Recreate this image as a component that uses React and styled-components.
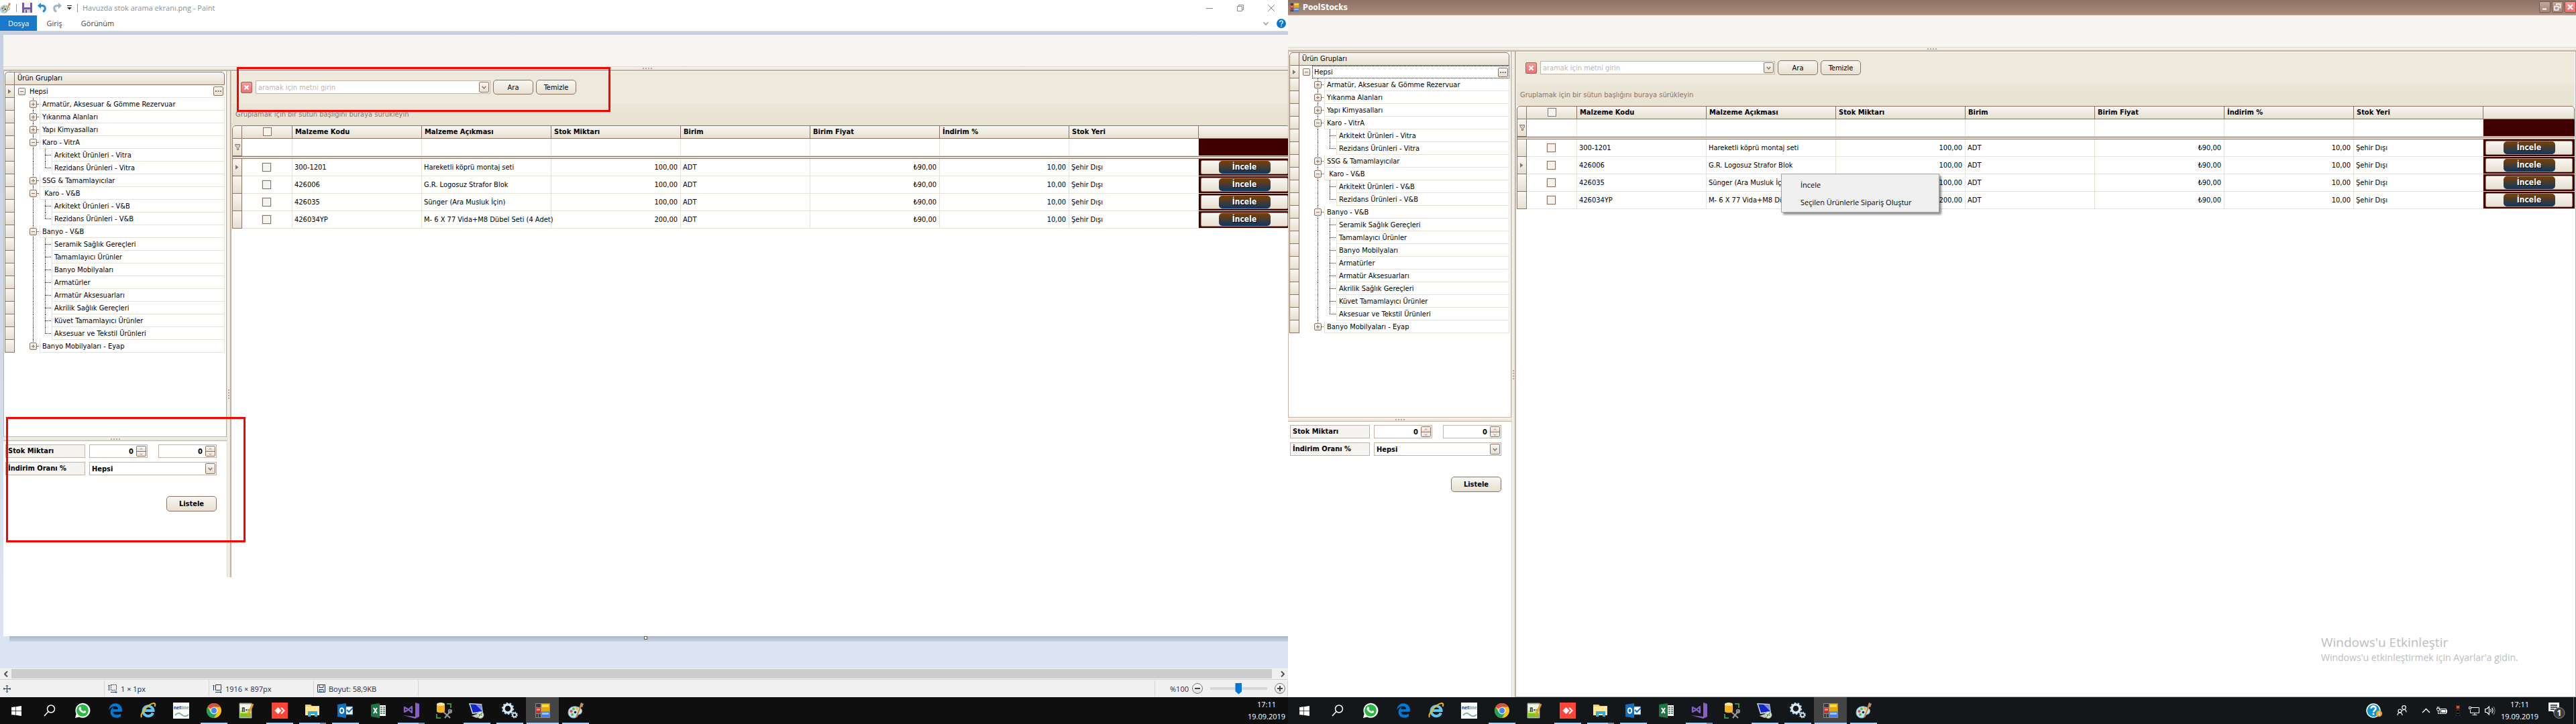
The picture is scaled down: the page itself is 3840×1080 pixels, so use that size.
import React, { useId } from "react";
import styled, { createGlobalStyle, css } from "styled-components";
import { FaWindows, FaEdgeLegacy, FaWhatsapp } from "react-icons/fa";

const TAHOMA = '"DejaVu Sans Condensed", "DejaVu Sans", sans-serif';
const SEGOE = '"Open Sans", "Noto Sans", sans-serif';

const brown = "#8c7264";
const taupe = "#c3b3a6";
const rule = "#e7e2d6";
const bevel = "linear-gradient(#f8f6f3, #e7e0d0)";

const GlobalStyle = createGlobalStyle`
  *, *::before, *::after { box-sizing: border-box; }
  html, body { margin: 0; }
  body { background: #fff; font-family: ${TAHOMA}; font-size: 11px; color: #000; overflow: hidden; }
  button, input, select { font: inherit; color: inherit; margin: 0; padding: 0; }
`;

/* ---------- desktop ---------- */

const Desktop = styled.div`
  display: grid;
  grid-template-columns: repeat(2, minmax(0, 1fr));
  height: 100vh;
`;

const Screen = styled.section`
  display: flex;
  flex-direction: column;
  min-width: 0;
  min-height: 0;
  height: 100%;
  position: relative;
  background: #fff;
`;

/* ---------- stock application ---------- */

const StockShell = styled.div`
  display: flex;
  flex-direction: column;
  flex: 1;
  min-height: 0;
`;

const Banner = styled.div`
  height: 47px;
  flex: none;
  background: #f6f5f1;
`;

const Grip = styled.span`
  display: block;
  width: ${(p) => (p.$vertical ? 2 : 14)}px;
  height: ${(p) => (p.$vertical ? 14 : 2)}px;
  background: repeating-linear-gradient(${(p) => (p.$vertical ? "180deg" : "90deg")}, #b9a797 0 2px, transparent 2px 4px);
`;

const HSplitter = styled.div`
  height: 7px;
  flex: none;
  display: flex;
  align-items: center;
  justify-content: center;
  background: linear-gradient(#f8f5ef, #e9e3d6);
  border-top: 1px solid ${(p) => (p.$strong ? taupe : "#ded8cb")};
  border-bottom: ${(p) => (p.$strong ? 1 : 2)}px solid ${taupe};
`;

const VSplitter = styled.div`
  width: 7px;
  flex: none;
  display: flex;
  align-items: center;
  justify-content: center;
  background: linear-gradient(90deg, #f8f5ef, #ece6da);
  border-left: 1px solid #ded8cb;
  border-right: 2px solid ${taupe};
`;

const Columns = styled.div`
  display: flex;
  flex: 1;
  min-height: 0;
`;

const SidePane = styled.aside`
  width: 333px;
  flex: none;
  display: flex;
  flex-direction: column;
`;

const TreePane = styled.div`
  height: 545px;
  flex: none;
  padding: 1px 2px 0 1px;
  border: solid ${taupe};
  border-width: 0 1px;
`;

const TreeHeader = styled.div`
  display: flex;
  height: 20px;
  border: 1px solid ${brown};
  border-radius: 5px 5px 0 0;
  background: ${bevel};
`;

const HeaderStub = styled.span`
  width: 14px;
  flex: none;
  border-right: 1px solid ${brown};
`;

const HeaderText = styled.span`
  padding: 0 4px;
  line-height: 17px;
`;

const TreeList = styled.ul`
  list-style: none;
  margin: 0;
  padding: 0;
`;

const TreeRow = styled.li`
  display: flex;
  height: 19px;
`;

const RowHandle = styled.span`
  width: 15px;
  flex: none;
  display: flex;
  align-items: center;
  justify-content: center;
  border: solid ${brown};
  border-width: 0 1px 1px;
  background: ${bevel};
`;

const dots = (dir) => `repeating-linear-gradient(${dir}, #222 0 1px, transparent 1px 2px)`;
const guides = {
  root: css``,
  pass: css`background: ${dots("180deg")} 8px 0 / 1px 100% no-repeat;`,
  tee: css`background: ${dots("180deg")} 8px 0 / 1px 100% no-repeat, ${dots("90deg")} 8px 9px / 10px 1px no-repeat;`,
  end: css`background: ${dots("180deg")} 8px 0 / 1px 9px no-repeat, ${dots("90deg")} 8px 9px / 10px 1px no-repeat;`,
};

const Guide = styled.span`
  width: ${(p) => (p.$kind === "root" ? 19 : 18)}px;
  flex: none;
  display: flex;
  align-items: center;
  padding-left: ${(p) => (p.$kind === "root" ? 5 : 3)}px;
  ${(p) => guides[p.$kind]}
`;

const Toggle = styled.button`
  width: 11px;
  height: 11px;
  display: flex;
  border: 1px solid ${brown};
  border-radius: 2px;
  background: ${bevel};
  svg { width: 9px; height: 9px; }
`;

const TreeCell = styled.span`
  flex: 1;
  display: flex;
  align-items: center;
  justify-content: space-between;
  padding: 0 1px 0 3px;
  border: solid ${rule};
  border-width: 0 1px 1px;
  white-space: pre;
  ${(p) => p.$root && css`border-left-color: transparent; padding-left: 2px;`}
  ${(p) => p.$focused && css`border: 1px dotted #000;`}
`;

const DotsButton = styled.button`
  width: 15px;
  height: 14px;
  display: flex;
  align-items: center;
  justify-content: center;
  border: 1px solid ${brown};
  border-radius: 2px;
  background: ${bevel};
`;

const FilterForm = styled.form`
  display: grid;
  grid-template-columns: 119px 87px 87px;
  grid-auto-rows: 20px;
  column-gap: 6px;
  row-gap: 6px;
  padding: 5px 14px 0 3px;
  font-weight: bold;
`;

const FieldLabel = styled.label`
  border: 1px solid ${taupe};
  background: #f6f4f1;
  padding: 0 3px;
  line-height: 17px;
`;

const Spin = styled.span`
  display: flex;
  align-items: center;
  padding-right: 1px;
  border: 1px solid ${taupe};
  background: #fff;
  margin-left: ${(p) => (p.$second ? 10 : 0)}px;
  width: 87px;
`;

const SpinInput = styled.input`
  flex: 1;
  min-width: 0;
  border: 0;
  padding: 0 4px;
  height: 17px;
  text-align: right;
  background: transparent;
`;

const SpinButtons = styled.span`
  width: 15px;
  height: 16px;
  display: grid;
  grid-template-rows: 1fr 1fr;
  border: 1px solid ${brown};
  border-radius: 2px;
  overflow: hidden;
`;

const SpinButton = styled.button`
  border: 0;
  display: flex;
  align-items: center;
  justify-content: center;
  background: ${bevel};
  & + & { border-top: 1px solid ${brown}; }
`;

const SelectBox = styled.span`
  grid-column: 2 / 4;
  display: grid;
  align-items: center;
  width: 190px;
  border: 1px solid ${taupe};
  background: #fff;
`;

const Select = styled.select`
  grid-area: 1 / 1;
  appearance: none;
  border: 0;
  height: 18px;
  padding: 0 3px;
  background: transparent;
  font-weight: bold;
`;

const SelectArrow = styled.span`
  grid-area: 1 / 1;
  justify-self: end;
  width: 15px;
  height: 16px;
  margin-right: 1px;
  display: flex;
  align-items: center;
  justify-content: center;
  border: 1px solid ${brown};
  border-radius: 2px;
  background: ${bevel};
  pointer-events: none;
`;

const BevelButton = styled.button`
  height: ${(p) => (p.$bold ? 23 : 22)}px;
  width: ${(p) => (p.$bold ? 75 : 60)}px;
  border: 1px solid ${brown};
  border-radius: 5px;
  background: ${bevel};
  font-weight: ${(p) => (p.$bold ? "bold" : "normal")};
`;

const FormActions = styled.div`
  grid-column: 1 / 4;
  display: flex;
  justify-content: flex-end;
  padding-top: 25px;
  width: 315px;
`;

const MainPane = styled.main`
  flex: 1;
  min-width: 0;
  padding: 1px 1px 0;
  border: solid ${taupe};
  border-width: 0 1px 1px 0;
  background: #fff;
`;

const SearchBar = styled.form`
  height: 47px;
  display: flex;
  align-items: center;
  gap: 4px;
  padding: 0 13px 1px;
  background: #ede9dd;
`;

const CloseSearch = styled.button`
  width: 17px;
  height: 17px;
  margin-right: 1px;
  display: flex;
  align-items: center;
  justify-content: center;
  border: 1px solid #8e6a60;
  border-radius: 2px;
  background: linear-gradient(#f59a96, #ee7070);
`;

const SearchField = styled.span`
  width: 350px;
  height: 20px;
  display: flex;
  align-items: center;
  padding-right: 1px;
  border: 1px solid ${taupe};
  background: #fff;
`;

const SearchInput = styled.input`
  flex: 1;
  min-width: 0;
  border: 0;
  padding: 0 3px;
  background: transparent;
  &::placeholder { color: #bdb5b0; opacity: 1; }
`;

const DropButton = styled.button`
  width: 15px;
  height: 16px;
  display: flex;
  align-items: center;
  justify-content: center;
  border: 1px solid ${brown};
  border-radius: 2px;
  background: ${bevel};
`;

const GroupPanel = styled.div`
  height: 33px;
  padding: 0 5px;
  line-height: 34px;
  color: ${brown};
  background: linear-gradient(#ebe5d7, #e8e2d2);
`;

const Grid = styled.table`
  width: 100%;
  table-layout: fixed;
  border-collapse: separate;
  border-spacing: 0;
`;

const HeadCell = styled.th`
  height: 20px;
  padding: 0 4px 2px;
  text-align: ${(p) => (p.$center ? "center" : "left")};
  font-weight: bold;
  border: solid ${brown};
  border-width: 1px 1px 1px 0;
  background: ${bevel};
  &:first-child { border-left-width: 1px; border-top-left-radius: 5px; }
  &:last-child { border-top-right-radius: 5px; }
`;

const Cell = styled.td`
  height: 26px;
  padding: 0 4px 1px 3px;
  text-align: ${(p) => p.$align || "left"};
  white-space: nowrap;
  border: solid ${rule};
  border-width: 0 1px 1px 0;
`;

const HandleCell = styled.td`
  padding: 0;
  text-align: center;
  border: solid ${brown};
  border-width: 0 1px 1px;
  background: ${bevel};
  svg { display: block; margin: 0 auto; }
`;

const DarkCell = styled.td`
  height: 26px;
  padding: 2px 3px;
  background: #400000;
  border-bottom: 1px solid ${rule};
`;

const GapCell = styled.td`
  height: 4px;
  padding: 0;
  border: solid ${brown};
  border-width: 1px 0 1px 1px;
  background: #ebe4d8;
`;

const Check = styled.input`
  appearance: none;
  display: block;
  width: 13px;
  height: 13px;
  margin: 0 auto;
  border: 1px solid ${brown};
  background: #f6f4f1;
  outline: 1px solid #efece6;
`;

const InspectButton = styled.button`
  display: flex;
  justify-content: center;
  width: 100%;
  height: 21px;
  border: 1px solid #a08b80;
  border-radius: 2px;
  background: ${bevel};
`;

const Pill = styled.span`
  width: 77px;
  height: 19px;
  line-height: 19px;
  border-radius: 5px;
  color: #fff;
  font-weight: bold;
  font-size: 12px;
  text-shadow: 1px 1px 0 #000;
  background: linear-gradient(#7c3f00, #0d3763);
`;

const tree = [
  ["Hepsi", 0, "-"],
  ["Armatür, Aksesuar & Gömme Rezervuar", 1, "+"],
  ["Yıkanma Alanları", 1, "+"],
  ["Yapı Kimyasalları", 1, "+"],
  ["Karo - VitrA", 1, "-"],
  ["Arkitekt Ürünleri - Vitra", 2],
  ["Rezidans Ürünleri - Vitra", 2, "", true],
  ["SSG & Tamamlayıcılar", 1, "+"],
  [" Karo - V&B", 1, "-"],
  ["Arkitekt Ürünleri - V&B", 2],
  ["Rezidans Ürünleri - V&B", 2, "", true],
  ["Banyo - V&B", 1, "-"],
  ["Seramik Sağlık Gereçleri", 2],
  ["Tamamlayıcı Ürünler", 2],
  ["Banyo Mobilyaları", 2],
  ["Armatürler", 2],
  ["Armatür Aksesuarları", 2],
  ["Akrilik Sağlık Gereçleri", 2],
  ["Küvet Tamamlayıcı Ürünler", 2],
  ["Aksesuar ve Tekstil Ürünleri", 2, "", true],
  ["Banyo Mobilyaları - Eyap", 1, "+", true],
];

const stocks = [
  ["300-1201", "Hareketli köprü montaj seti", "100,00"],
  ["426006", "G.R. Logosuz Strafor Blok", "100,00"],
  ["426035", "Sünger (Ara Musluk İçin)", "100,00"],
  ["426034YP", "M- 6 X 77 Vida+M8 Dübel Seti (4 Adet)", "200,00"],
];

const headings = ["Malzeme Kodu", "Malzeme Açıkması", "Stok Miktarı", "Birim", "Birim Fiyat", "İndirim %", "Stok Yeri"];

const Marker = () => (
  <svg width="5" height="7" viewBox="0 0 5 7"><path d="M0 0L4.5 3.5L0 7z" fill={brown} /></svg>
);
const Chevron = ({ up, small }) => (
  <svg width={small ? 5 : 7} height={small ? 3 : 5} viewBox="0 0 7 5">
    <path d={up ? "M0.7 4.3L3.5 1L6.3 4.3" : "M0.7 0.7L3.5 4L6.3 0.7"} fill="none" stroke={brown} strokeWidth="1.4" />
  </svg>
);

function Expander({ sign }) {
  return (
    <Toggle type="button" aria-label={sign === "+" ? "Genişlet" : "Daralt"}>
      <svg viewBox="0 0 9 9">
        <path d={sign === "+" ? "M2 4.5h5M4.5 2v5" : "M2 4.5h5"} stroke={brown} />
      </svg>
    </Toggle>
  );
}

function ProductTree({ focused }) {
  return (
    <TreePane>
      <TreeHeader><HeaderStub /><HeaderText>Ürün Grupları</HeaderText></TreeHeader>
      <TreeList>
        {tree.map(([name, level, sign, last], i) => (
          <TreeRow key={i}>
            <RowHandle>{i === 0 && <Marker />}</RowHandle>
            <Guide $kind="root">{level === 0 && <Expander sign={sign} />}</Guide>
            {level > 0 && (
              <Guide $kind={level === 2 ? "pass" : last ? "end" : "tee"}>
                {level === 1 && <Expander sign={sign} />}
              </Guide>
            )}
            {level > 1 && <Guide $kind={last ? "end" : "tee"} />}
            <TreeCell $root={level === 0} $focused={level === 0 && focused}>
              {name}
              {level === 0 && (
                <DotsButton type="button" aria-label="Seç">
                  <svg width="9" height="2"><path d="M0 1h2M3.500 1h2M7 1h2" stroke={brown} strokeWidth="2" /></svg>
                </DotsButton>
              )}
            </TreeCell>
          </TreeRow>
        ))}
      </TreeList>
    </TreePane>
  );
}

function SpinBox({ id, second, label }) {
  return (
    <Spin $second={second}>
      <SpinInput id={id} aria-label={label} defaultValue="0" />
      <SpinButtons>
        <SpinButton type="button" aria-label="Artır"><Chevron up small /></SpinButton>
        <SpinButton type="button" aria-label="Azalt"><Chevron small /></SpinButton>
      </SpinButtons>
    </Spin>
  );
}

function StockApp({ activeRow, focusedTree }) {
  const id = useId();
  return (
    <StockShell>
      <Banner />
      <HSplitter><Grip /></HSplitter>
      <Columns>
        <SidePane>
          <ProductTree focused={focusedTree} />
          <HSplitter $strong><Grip /></HSplitter>
          <FilterForm>
            <FieldLabel htmlFor={id + "min"}>Stok Miktarı</FieldLabel>
            <SpinBox id={id + "min"} />
            <SpinBox second label="Stok Miktarı üst sınır" />
            <FieldLabel htmlFor={id + "rate"}>İndirim Oranı %</FieldLabel>
            <SelectBox>
              <Select id={id + "rate"}><option>Hepsi</option></Select>
              <SelectArrow><Chevron /></SelectArrow>
            </SelectBox>
            <FormActions><BevelButton type="button" $bold>Listele</BevelButton></FormActions>
          </FilterForm>
        </SidePane>
        <VSplitter><Grip $vertical /></VSplitter>
        <MainPane>
          <SearchBar>
            <CloseSearch type="button" aria-label="Kapat">
              <svg width="9" height="9"><path d="M1.500 1.500l6 6M7.500 1.500l-6 6" stroke="#fff" strokeWidth="2" /></svg>
            </CloseSearch>
            <SearchField>
              <SearchInput aria-label="Arama metni" placeholder="aramak için metni girin" />
              <DropButton type="button" aria-label="Geçmiş"><Chevron /></DropButton>
            </SearchField>
            <BevelButton type="button">Ara</BevelButton>
            <BevelButton type="button">Temizle</BevelButton>
          </SearchBar>
          <GroupPanel>Gruplamak için bir sütun başlığını buraya sürükleyin</GroupPanel>
          <Grid>
            <colgroup>
              <col style={{ width: 15 }} />
              <col style={{ width: 75 }} />
              {headings.map((h) => <col key={h} />)}
              <col style={{ width: 136 }} />
            </colgroup>
            <thead>
              <tr>
                <HeadCell />
                <HeadCell $center><Check type="checkbox" aria-label="Tümünü seç" /></HeadCell>
                {headings.map((h) => <HeadCell key={h}>{h}</HeadCell>)}
                <HeadCell />
              </tr>
            </thead>
            <tbody>
              <tr>
                <HandleCell>
                  <svg width="8" height="9" viewBox="0 0 8 9"><path d="M0.5 0.5h7v3l-2 2v3h-2v-3l-2-2z" fill="#d8ccc0" stroke={brown} /></svg>
                </HandleCell>
                <Cell />
                {headings.map((h) => <Cell key={h} />)}
                <DarkCell />
              </tr>
              <tr><GapCell colSpan={10} /></tr>
              {stocks.map(([code, name, qty], i) => (
                <tr key={code}>
                  <HandleCell>{i === activeRow && <Marker />}</HandleCell>
                  <Cell><Check type="checkbox" aria-label={code} /></Cell>
                  <Cell>{code}</Cell>
                  <Cell>{name}</Cell>
                  <Cell $align="right">{qty}</Cell>
                  <Cell>ADT</Cell>
                  <Cell $align="right">₺90,00</Cell>
                  <Cell $align="right">10,00</Cell>
                  <Cell>Şehir Dışı</Cell>
                  <DarkCell><InspectButton type="button"><Pill>İncele</Pill></InspectButton></DarkCell>
                </tr>
              ))}
            </tbody>
          </Grid>
        </MainPane>
      </Columns>
    </StockShell>
  );
}

/* ---------- PoolStocks window frame ---------- */

const PoolTitle = styled.header`
  height: 23px;
  flex: none;
  display: flex;
  align-items: center;
  gap: 5px;
  padding: 0 0 1px 3px;
  background: linear-gradient(#8c7265, #a98b7b);
  border-bottom: 1px solid #c9b0a2;
  color: #fff;
  font-size: 12px;
  font-weight: bold;
`;

const PoolControls = styled.div`
  margin-left: auto;
  display: flex;
  gap: 2px;
`;

const PoolControl = styled.button`
  width: 17px;
  height: 17px;
  display: flex;
  align-items: center;
  justify-content: center;
  border: 1px solid #74594d;
  border-radius: 2px;
  background: ${(p) => (p.$close ? "linear-gradient(#f59a96, #ee7070)" : "linear-gradient(#c0a79b, #a48778)")};
`;

const ContextMenu = styled.div`
  position: absolute;
  left: 735px;
  top: 259px;
  width: 236px;
  padding: 2px 3px;
  display: flex;
  flex-direction: column;
  border: 1px solid #a3a3a3;
  background: #f0f0f0;
  box-shadow: 3px 3px 3px rgba(0, 0, 0, 0.45);
`;

const MenuItem = styled.button`
  height: 26px;
  border: 0;
  padding: 0 25px;
  text-align: left;
  background: transparent;
  font-family: ${SEGOE};
  font-size: 11px;
`;

const Activation = styled.div`
  position: absolute;
  right: 82px;
  bottom: 89px;
  width: 298px;
  color: #bdbdbd;
  font-family: ${SEGOE};
  white-space: nowrap;
`;

const ActivationTitle = styled.div`
  font-size: 19px;
  line-height: 26px;
`;

const ActivationText = styled.div`
  font-size: 14px;
  line-height: 20px;
`;

const FormIcon = ({ size }) => (
  <svg width={size} height={size} viewBox="0 0 22 22">
    <path d="M0 0h22v22H0z" fill="#8a8a8a" />
    <path d="M1 1h7v5H1zM1 16h3v5H1zM5 16h3v5H5z" fill="#3d3d3d" />
    <path d="M1 7h7v8H1z" fill="#cc2c22" /><path d="M2 8h5v3H2z" fill="#f0857b" />
    <path d="M9 1h12v11H9z" fill="#e6a800" /><path d="M10 2h10v4H10z" fill="#ffd955" />
    <path d="M9 13h12v8H9z" fill="#4b7fe0" /><path d="M10 14h10v3H10z" fill="#9dc1ff" />
  </svg>
);

/* ---------- Paint window ---------- */

const PaintTitle = styled.header`
  height: 23px;
  flex: none;
  display: flex;
  align-items: center;
  color: #8f8f8f;
  font-family: ${SEGOE};
  font-size: 11px;
`;

const QuickTools = styled.div`
  display: flex;
  align-items: center;
  width: 123px;
  gap: 8px;
`;

const PlainButton = styled.button`
  border: 0;
  display: flex;
  align-items: center;
  justify-content: center;
  background: transparent;
`;

const Bar = styled.span`
  width: 1px;
  height: 12px;
  background: #9a9a9a;
`;

const WindowControls = styled.div`
  margin-left: auto;
  padding-right: 2px;
  display: flex;
`;

const WindowControl = styled(PlainButton)`
  width: 46px;
  height: 20px;
`;

const RibbonTabs = styled.nav`
  height: 24px;
  flex: none;
  display: flex;
  align-items: stretch;
  border-bottom: 1px solid #dadbdc;
  font-family: ${SEGOE};
  font-size: 11px;
  color: #444;
`;

const RibbonTab = styled.button`
  border: 0;
  padding: 0 ${(p) => (p.$active ? 12 : 14)}px 1px;
  background: ${(p) => (p.$active ? "#1979ca" : "transparent")};
  color: ${(p) => (p.$active ? "#fff" : "#444")};
`;

const RibbonTail = styled.div`
  margin-left: auto;
  display: flex;
  align-items: center;
  gap: 12px;
  padding-right: 3px;
`;

const Workspace = styled.div`
  flex: 1;
  min-height: 0;
  padding: 5px 0 0 5px;
  overflow: hidden;
  background: linear-gradient(#c6cfe0, #dce6f2);
`;

const Canvas = styled.div`
  position: relative;
  height: 897px;
  background: #fff;
`;

const CanvasClip = styled.div`
  height: 809px;
  overflow: hidden;
`;

const CanvasImage = styled.div`
  display: flex;
  width: calc(100% + 5px);
  height: 1017px;
`;

const Annotation = styled.span`
  position: absolute;
  border: 3px solid #fe0000;
  left: ${(p) => p.$x}px;
  top: ${(p) => p.$y}px;
  width: ${(p) => p.$w}px;
  height: ${(p) => p.$h}px;
`;

const CanvasShadow = styled.div`
  height: 8px;
  margin-left: 9px;
  padding-right: 9px;
  display: flex;
  justify-content: center;
  background: linear-gradient(#aab6cb, #c9d4e4);
`;

const Handle = styled.span`
  width: 5px;
  height: 5px;
  border: 1px solid #555;
  background: #fff;
`;

const ScrollBar = styled.div`
  height: 17px;
  flex: none;
  display: flex;
  padding: 1px 0;
  background: #f0f0f0;
  border-bottom: 1px solid #d4d4d4;
`;

const ScrollArrow = styled(PlainButton)`
  width: ${(p) => (p.$end ? 24 : 17)}px;
  ${(p) => p.$end && css`padding-left: 8px;`}
`;

const ScrollThumb = styled.span`
  flex: 1;
  background: #cdcdcd;
`;

const StatusBar = styled.footer`
  height: 26px;
  flex: none;
  display: flex;
  padding: 1px 0;
  background: #f0f0f0;
  font-family: ${SEGOE};
  font-size: 11px;
  color: #1e2b4a;
`;

const StatusCell = styled.div`
  width: 156px;
  display: flex;
  align-items: center;
  gap: 5px;
  padding-left: 5px;
  border-right: 1px solid #d4d4d4;
`;

const ZoomCell = styled.div`
  margin-left: auto;
  width: 199px;
  display: flex;
  align-items: center;
  justify-content: space-between;
  padding: 0 3px 0 22px;
  border: solid #d4d4d4;
  border-width: 0 1px;
`;

const RoundButton = styled.button`
  width: 16px;
  height: 16px;
  display: flex;
  align-items: center;
  justify-content: center;
  border: 1px solid #777;
  border-radius: 50%;
  background: linear-gradient(#fff, #ddd);
`;

const ZoomSlider = styled.input`
  appearance: none;
  width: 85px;
  height: 18px;
  margin: 0 6px;
  background: linear-gradient(#d6d6d6, #d6d6d6) 0 50% / 100% 4px no-repeat;
  &::-webkit-slider-thumb {
    appearance: none;
    width: 10px;
    height: 17px;
    background: #0078d7;
    clip-path: polygon(0 0, 100% 0, 100% 75%, 50% 100%, 0 75%);
  }
`;

const PaletteIcon = ({ size }) => (
  <svg width={size} height={size} viewBox="0 0 24 24">
    <path d="M1 15C1 8 7 5 13 6c7 1 10 5 8 9-1 3-4 2-6 4-1 2-2 4-6 4-5 0-8-4-8-8z" fill="#bfe3f5" stroke="#6fa8c7" />
    <circle cx="5.500" cy="13" r="2" fill="#e5443a" /><circle cx="9" cy="9.500" r="2" fill="#5fb54a" />
    <circle cx="14" cy="9" r="2" fill="#f3b52b" /><circle cx="7" cy="18" r="2" fill="#58b947" />
    <circle cx="11.500" cy="14.500" r="1.800" fill="#1c2c3a" />
    <path d="M20 5L13 22" stroke="#d9822b" strokeWidth="2" /><path d="M18 6l2-6 4 2-2 5z" fill="#c98f5a" />
  </svg>
);

const SizeIcon = ({ dashed }) => (
  <svg width="14" height="13" viewBox="0 0 14 13" fill="none" stroke="#1f3c68">
    <path d="M1.500 9V1M0 2.500L1.500 1L3 2.500M4 11.500h9M11.500 10l1.500 1.500l-1.500 1.500" />
    <path d="M4.500 0.500h8v8h-8z" strokeDasharray={dashed ? "2 1" : undefined} />
  </svg>
);

const StockAppFrame = styled.div`
  display: flex;
  flex-direction: column;
  flex: 1;
  min-width: 0;
`;

function PaintWindow() {
  return (
    <Screen>
      <PaintTitle>
        <QuickTools>
          <PaletteIcon size={16} />
          <Bar />
          <PlainButton aria-label="Kaydet">
            <svg width="15" height="15" viewBox="0 0 15 15"><path d="M0 0h15v15H0z" fill="#7c55b5" /><path d="M3 0h9v7H3z" fill="#f2eefa" /><path d="M3 10h9v5H3z" fill="#cfcfcf" /><path d="M5 11h2v4H5z" fill="#6a45a0" /></svg>
          </PlainButton>
          <PlainButton aria-label="Geri al">
            <svg width="14" height="15" viewBox="0 0 14 15"><path d="M5 0v9L0 4.500z" fill="#1f8fe0" /><path d="M3 4.500h4c5 0 6 6 1 9" fill="none" stroke="#1f8fe0" strokeWidth="3" /></svg>
          </PlainButton>
          <PlainButton aria-label="Yinele">
            <svg width="14" height="15" viewBox="0 0 14 15"><path d="M9 0v9l5-4.500z" fill="#9fb4cd" /><path d="M11 4.500H7c-5 0-6 6-1 9" fill="none" stroke="#9fb4cd" strokeWidth="3" /></svg>
          </PlainButton>
          <PlainButton aria-label="Özelleştir">
            <svg width="7" height="7"><path d="M0 0.500h7" stroke="#222" /><path d="M0 3h7L3.500 6.500z" fill="#222" /></svg>
          </PlainButton>
          <Bar />
        </QuickTools>
        <span>Havuzda stok arama ekranı.png - Paint</span>
        <WindowControls>
          <WindowControl aria-label="Simge durumuna küçült"><svg width="10" height="10"><path d="M0 5.500h10" stroke="#888" /></svg></WindowControl>
          <WindowControl aria-label="Geri yükle"><svg width="10" height="10" fill="none" stroke="#888"><path d="M0.500 2.500h7v7h-7zM2.500 2V0.500h7v7H8" /></svg></WindowControl>
          <WindowControl aria-label="Kapat"><svg width="10" height="10"><path d="M0 0l10 10M10 0L0 10" stroke="#888" /></svg></WindowControl>
        </WindowControls>
      </PaintTitle>
      <RibbonTabs>
        <RibbonTab $active>Dosya</RibbonTab>
        <RibbonTab>Giriş</RibbonTab>
        <RibbonTab>Görünüm</RibbonTab>
        <RibbonTail>
          <PlainButton aria-label="Şeridi genişlet"><svg width="8" height="6"><path d="M0.500 1L4 5L7.500 1" fill="none" stroke="#999" strokeWidth="1.500" /></svg></PlainButton>
          <PlainButton aria-label="Yardım">
            <svg width="14" height="14" viewBox="0 0 14 14"><circle cx="7" cy="7" r="7" fill="#0a78d1" /><path d="M4.800 5.200c0-3 4.500-3 4.500-.3C9.300 6.600 7 6.800 7 8.800M7 10v1.600" fill="none" stroke="#fff" strokeWidth="1.400" /></svg>
          </PlainButton>
        </RibbonTail>
      </RibbonTabs>
      <Workspace>
        <Canvas>
          <CanvasClip>
            <CanvasImage><StockAppFrame><StockApp activeRow={0} /></StockAppFrame></CanvasImage>
          </CanvasClip>
          <Annotation $x={348} $y={48} $w={557} $h={67} />
          <Annotation $x={4} $y={570} $w={357} $h={187} />
        </Canvas>
        <CanvasShadow><Handle /></CanvasShadow>
      </Workspace>
      <ScrollBar>
        <ScrollArrow aria-label="Sola kaydır"><svg width="6" height="9"><path d="M5 0.500L1 4.500L5 8.500" fill="none" stroke="#505050" strokeWidth="2" /></svg></ScrollArrow>
        <ScrollThumb />
        <ScrollArrow $end aria-label="Sağa kaydır"><svg width="6" height="9"><path d="M1 0.500L5 4.500L1 8.500" fill="none" stroke="#505050" strokeWidth="2" /></svg></ScrollArrow>
      </ScrollBar>
      <StatusBar>
        <StatusCell><svg width="11" height="11" fill="none" stroke="#1f3c68"><path d="M5.500 0v11M0 5.500h11M4 1.500L5.500 0L7 1.500M4 9.500L5.500 11L7 9.500M1.500 4L0 5.500L1.500 7M9.500 4L11 5.500L9.500 7" /></svg></StatusCell>
        <StatusCell><SizeIcon dashed />1 × 1px</StatusCell>
        <StatusCell><SizeIcon />1916 × 897px</StatusCell>
        <StatusCell><svg width="12" height="12" fill="none" stroke="#1f3c68"><path d="M0.500 0.500h11v11h-11zM3 0.500v4h6v-4M3 11.500v-4h6v4M5.500 9v2" /></svg>Boyut: 58,9KB</StatusCell>
        <ZoomCell>
          <span>%100</span>
          <RoundButton aria-label="Uzaklaştır"><svg width="8" height="8"><path d="M0 4h8" stroke="#444" strokeWidth="2" /></svg></RoundButton>
          <ZoomSlider type="range" aria-label="Yakınlaştırma" defaultValue="50" />
          <RoundButton aria-label="Yakınlaştır"><svg width="8" height="8"><path d="M0 4h8M4 0v8" stroke="#444" strokeWidth="2" /></svg></RoundButton>
        </ZoomCell>
      </StatusBar>
      <Taskbar />
    </Screen>
  );
}

/* ---------- taskbar ---------- */

const TaskbarShell = styled.footer`
  height: 40px;
  flex: none;
  display: flex;
  background: ${(p) => (p.$tray ? "#14171a" : "#0f0f0f")};
  color: #fff;
  font-family: ${SEGOE};
  font-size: 11px;
`;

const TaskButton = styled.button`
  width: 49px;
  height: 40px;
  flex: none;
  display: flex;
  align-items: center;
  justify-content: center;
  border: 0;
  color: #fff;
  background:
    linear-gradient(90deg, #a6d3fb ${(p) => (p.$multi ? "31px" : "100%")}, #6d8ba6 0)
      50% 100% / ${(p) => (p.$active ? "48px" : p.$open ? "40px" : "0")} 2px no-repeat,
    ${(p) => (p.$active ? "#444" : "transparent")};
`;

const Clock = styled.time`
  display: flex;
  flex-direction: column;
  align-items: center;
  justify-content: center;
  line-height: 18px;
  width: 64px;
  margin-left: ${(p) => (p.$tray ? 0 : "auto")};
`;

const Tray = styled.div`
  margin-left: auto;
  display: flex;
  align-items: center;
`;

const TrayButton = styled(PlainButton)`
  width: ${(p) => p.$w || 24}px;
  height: 40px;
`;

const Peek = styled.span`
  width: 4px;
  height: 40px;
  margin-left: 2px;
  border-left: 1px solid #666;
`;

const icons = {
  Başlat: <FaWindows size={17} />,
  Ara: <svg width="18" height="18" viewBox="0 0 18 18" fill="none" stroke="#fff" strokeWidth="1.500"><circle cx="11" cy="6.500" r="5.500" /><path d="M7 10.500L1 17" /></svg>,
  WhatsApp: (
    <svg width="24" height="24" viewBox="0 0 24 24">
      <path d="M1 23l1.700-6A11 11 0 1 1 7 21.400z" fill="#fff" />
      <circle cx="12" cy="11.800" r="9" fill="#2bb741" />
      <path d="M8 6.500c1-.8 1.600-.2 2 1.200.4 1-.8 1.300-.4 2 .9 1.700 2 2.700 3.800 3.400.8.300 1.200-1.500 2-1.100 1.800.8 2.300 1 1.700 2.200-1 2.200-3.500 1.900-5.900.7-2.300-1.200-3.900-3-4.700-5-.5-1.300.3-2.600 1.500-3.400z" fill="#fff" />
    </svg>
  ),
  Edge: <FaEdgeLegacy size={22} color="#0078d7" />,
  "Internet Explorer": (
    <svg width="24" height="24" viewBox="0 0 24 24">
      <path d="M19 15.500A7.500 7.500 0 1 1 19.500 12H6" fill="none" stroke="#5cc6f2" strokeWidth="4" />
      <path d="M2 22C-1 17 12 2 20 1c3 0 2.500 3 1.500 5" fill="none" stroke="#f0b91c" strokeWidth="2" />
    </svg>
  ),
  netline: (
    <svg width="24" height="24" viewBox="0 0 24 24">
      <path d="M0 0h24v24H0z" fill="#fff" />
      <text x="1" y="10" fontFamily="Liberation Sans, sans-serif" fontWeight="bold" fontSize="7" fill="#14225c">net<tspan fill="#5c9c8e">line</tspan></text>
      <path d="M3 19c5-6 8-2 11 0s6 2 9-1" fill="none" stroke="#7fb0a5" strokeWidth="2" />
    </svg>
  ),
  Chrome: (
    <svg width="22" height="22" viewBox="0 0 22 22">
      <circle cx="11" cy="11" r="11" fill="#fbc116" />
      <path d="M11 11L1.500 5.500A11 11 0 0 1 20.500 5.500H11z" fill="#dd4b3e" />
      <path d="M1.500 5.500A11 11 0 0 0 11 22l4.800-8.300L6.200 13.700z" fill="#1aa260" />
      <circle cx="11" cy="11" r="5.400" fill="#fff" /><circle cx="11" cy="11" r="4.200" fill="#4587f3" />
    </svg>
  ),
  "Notepad++": (
    <svg width="24" height="24" viewBox="0 0 24 24">
      <path d="M1 1h18v22H1z" fill="#f3f6ea" stroke="#888" /><path d="M2 12h16v10H2z" fill="#7cc71d" /><path d="M2 12h16v4H2z" fill="#c8e88f" />
      <path d="M5.500 14V8h2.500v6M10 11h3M14 11h3" fill="none" stroke="#333" strokeWidth="1.500" />
      <path d="M3 2h15" stroke="#777" strokeDasharray="1 1" />
      <path d="M21 2l-8 17" stroke="#e0a21b" strokeWidth="3" />
    </svg>
  ),
  AnyDesk: (
    <svg width="24" height="24" viewBox="0 0 24 24">
      <path d="M0 0h24v24H0z" fill="#ff4438" /><path d="M9.500 7l5 5-5 5-5-5z" fill="#fff" /><path d="M14 7.500l4.500 4.500-4.500 4.500" fill="none" stroke="#fff" strokeWidth="2" />
    </svg>
  ),
  "Dosya Gezgini": (
    <svg width="22" height="18" viewBox="0 0 22 18">
      <path d="M0 0h8l2 2h11v14H0z" fill="#f5cd5f" /><path d="M0 3h21v13H0z" fill="#ffe794" /><path d="M4 10h14v8h-4v-4H8v4H4z" fill="#35a9e1" />
    </svg>
  ),
  Outlook: (
    <svg width="23" height="22" viewBox="0 0 23 22">
      <path d="M12 5h11v12H12z" fill="#fff" stroke="#1071c6" /><path d="M14 10l3 3 6-6" fill="none" stroke="#1071c6" strokeWidth="2" />
      <path d="M0 2l13-2v22L0 20z" fill="#0f6fc5" />
      <ellipse cx="6.500" cy="11" rx="2.800" ry="3.800" fill="none" stroke="#fff" strokeWidth="2" />
    </svg>
  ),
  Excel: (
    <svg width="22" height="22" viewBox="0 0 22 22">
      <path d="M12 3h10v16H12z" fill="#fff" /><path d="M14 6h3M18 6h3M14 9h3M18 9h3M14 12h3M18 12h3M14 15h3M18 15h3" stroke="#217346" strokeWidth="1.500" />
      <path d="M0 2l13-2v22L0 20z" fill="#217346" /><path d="M4 7l5 8M9 7l-5 8" stroke="#fff" strokeWidth="2" />
    </svg>
  ),
  "Visual Studio": (
    <svg width="24" height="24" viewBox="0 0 24 24">
      <path d="M18 0l6 2v19l-6 3L0 19l18 2z" fill="#865fc5" />
      <path d="M2 7v7l6-3.500L13 15V6L8 10.500z" fill="none" stroke="#865fc5" strokeWidth="2.200" strokeLinejoin="round" />
    </svg>
  ),
  "SQL Yapılandırma": (
    <svg width="24" height="24" viewBox="0 0 24 24">
      <path d="M1 2v11c0 3 12 3 12 0V2z" fill="#f3b41f" /><ellipse cx="7" cy="2.500" rx="6" ry="2.500" fill="#fbe3a0" />
      <path d="M16 2h6v6M1 17v6h6" fill="none" stroke="#3f8e3d" strokeWidth="2" />
      <path d="M11 14l10 9M22 12l-9 11" stroke="#999" strokeWidth="2" /><circle cx="21" cy="13" r="2.500" fill="none" stroke="#999" strokeWidth="1.500" />
    </svg>
  ),
  "Uzak Masaüstü": (
    <svg width="24" height="24" viewBox="0 0 24 24">
      <path d="M0 1l19 1 2 13-16 2z" fill="#d5dbe6" /><path d="M2 2.500l16 .8 1.500 10.200-13.500 1.500z" fill="#1226c9" /><path d="M10 3l8 .4 1.400 9z" fill="#6d8ff5" />
      <path d="M4 20l8-3 6 2-6 4z" fill="#c9c9c9" /><circle cx="17" cy="18.500" r="5" fill="#e5e8e0" stroke="#aaa" /><path d="M14.500 17l2 2-2 2M19.500 15.500l-2 2 2 2" fill="none" stroke="#3a9a3a" strokeWidth="1.300" />
    </svg>
  ),
  Hizmetler: (
    <svg width="24" height="24" viewBox="0 0 24 24" fill="none">
      <circle cx="9" cy="9" r="6" stroke="#d7e9f6" strokeWidth="3.500" /><circle cx="9" cy="9" r="8.200" stroke="#b9d8ee" strokeWidth="2" strokeDasharray="2.600 2.550" />
      <circle cx="19" cy="18.500" r="2.800" stroke="#d7e9f6" strokeWidth="1.800" /><circle cx="19" cy="18.500" r="4.200" stroke="#b9d8ee" strokeWidth="1.500" strokeDasharray="1.700 1.600" />
    </svg>
  ),
  PoolStocks: <FormIcon size={22} />,
  Paint: <PaletteIcon size={24} />,
};

const open = ["Chrome", "AnyDesk", "Dosya Gezgini", "Outlook", "Visual Studio", "Uzak Masaüstü", "Hizmetler", "Paint", "PoolStocks"];
const multi = ["Dosya Gezgini", "Visual Studio"];

function Taskbar({ tray }) {
  return (
    <TaskbarShell $tray={tray}>
      {Object.entries(icons).map(([name, icon]) => (
        <TaskButton key={name} aria-label={name} $open={open.includes(name)} $multi={multi.includes(name)} $active={name === "PoolStocks"}>
          {icon}
        </TaskButton>
      ))}
      {tray ? (
        <Tray>
          <TrayButton $w={34} aria-label="Yardım">
            <svg width="24" height="22" viewBox="0 0 24 22">
              <circle cx="11" cy="11" r="10" fill="#0b93d5" stroke="#fff" strokeWidth="1.500" />
              <path d="M7.500 8c0-4.500 7-4.500 7 0C14.500 10.500 11 10.800 11 13.500M11 15v2.500" fill="none" stroke="#fff" strokeWidth="2.600" />
              <circle cx="19.500" cy="15.500" r="4.500" fill="#f0a81e" /><path d="M19.500 13v1.200M19.500 15v3" stroke="#fff" strokeWidth="1.300" />
            </svg>
          </TrayButton>
          <TrayButton $w={48} aria-label="Kişiler">
            <svg width="15" height="16" viewBox="0 0 15 16" fill="none" stroke="#fff" strokeWidth="1.200"><circle cx="10.500" cy="3.500" r="2.800" /><circle cx="4.500" cy="8.500" r="2.500" /><path d="M1 15c0-5 7-5 7 0M8 8c3-3 6-1 6 2.500" /></svg>
          </TrayButton>
          <TrayButton aria-label="Gizli simgeler"><svg width="13" height="8"><path d="M1 7L6.500 1.500L12 7" fill="none" stroke="#fff" strokeWidth="1.400" /></svg></TrayButton>
          <TrayButton aria-label="Pil">
            <svg width="16" height="12" viewBox="0 0 16 12" fill="none" stroke="#fff"><path d="M5.500 3.500h9v7h-9zM15.500 5v4M0.500 2.500h4v2c0 2-4 2-4 0zM1.500 0v2M3.500 0v2M2.500 6v4.500h2" /><path d="M7 5h6.500v4H7z" fill="#fff" stroke="none" /></svg>
          </TrayButton>
          <TrayButton aria-label="Durum ışığı">
            <svg width="6" height="16"><path d="M0 0h6v16H0z" fill="#000" stroke="#555" /><path d="M1 1h4v4H1z" fill="#f04a24" /><path d="M1.500 7h3M1.500 12h3" stroke="#888" /></svg>
          </TrayButton>
          <TrayButton aria-label="Ağ">
            <svg width="16" height="14" fill="none" stroke="#fff"><path d="M4 2.500h11.500v8H2.500V6M0.500 1.500h3v3h-3zM9 10.500v3M5.500 13.500h7" /></svg>
          </TrayButton>
          <TrayButton aria-label="Ses">
            <svg width="16" height="14" fill="none" stroke="#fff" strokeWidth="1.200"><path d="M0.600 4.500h2.500L6.500 1v12L3 9.500H0.600z" /><path d="M8.500 5c1 1 1 3 0 4M10.500 3c2.200 2 2.200 6 0 8" /><path d="M12.500 1c3.500 3 3.500 9 0 12" stroke="#777" /></svg>
          </TrayButton>
          <Clock $tray><span>17:11</span><span>19.09.2019</span></Clock>
          <TrayButton $w={46} aria-label="1 bildirim">
            <svg width="26" height="24" viewBox="0 0 26 24">
              <path d="M1 0h16v13H11v4l-4-4H1z" fill="#fff" /><path d="M4 4h10M4 7h10M4 10h6" stroke="#14171a" strokeWidth="1.300" />
              <circle cx="17" cy="15.500" r="8" fill="#3b3d40" stroke="#8a8a8a" /><text x="17" y="20" textAnchor="middle" fontFamily="Open Sans" fontWeight="bold" fontSize="12" fill="#fff">1</text>
            </svg>
          </TrayButton>
          <Peek />
        </Tray>
      ) : (
        <Clock><span>17:11</span><span>19.09.2019</span></Clock>
      )}
    </TaskbarShell>
  );
}

export default function App() {
  return (
    <>
      <GlobalStyle />
      <Desktop>
        <PaintWindow />
        <Screen>
          <PoolTitle>
            <FormIcon size={14} />
            <span>PoolStocks</span>
            <PoolControls>
              <PoolControl aria-label="Simge durumuna küçült"><svg width="9" height="9"><path d="M1 7.500h6" stroke="#fff" strokeWidth="2" /></svg></PoolControl>
              <PoolControl aria-label="Geri yükle"><svg width="11" height="11" fill="none" stroke="#fff" strokeWidth="1.500"><path d="M1 4.500h5.500V10H1zM4 3V1h5.500v5.500H8" /></svg></PoolControl>
              <PoolControl $close aria-label="Kapat"><svg width="9" height="9"><path d="M1 1l7 7M8 1L1 8" stroke="#fff" strokeWidth="2" /></svg></PoolControl>
            </PoolControls>
          </PoolTitle>
          <StockApp activeRow={1} focusedTree />
          <ContextMenu>
            <MenuItem>İncele</MenuItem>
            <MenuItem>Seçilen Ürünlerle Sipariş Oluştur</MenuItem>
          </ContextMenu>
          <Activation>
            <ActivationTitle>Windows'u Etkinleştir</ActivationTitle>
            <ActivationText>Windows'u etkinleştirmek için Ayarlar'a gidin.</ActivationText>
          </Activation>
          <Taskbar tray />
        </Screen>
      </Desktop>
    </>
  );
}
